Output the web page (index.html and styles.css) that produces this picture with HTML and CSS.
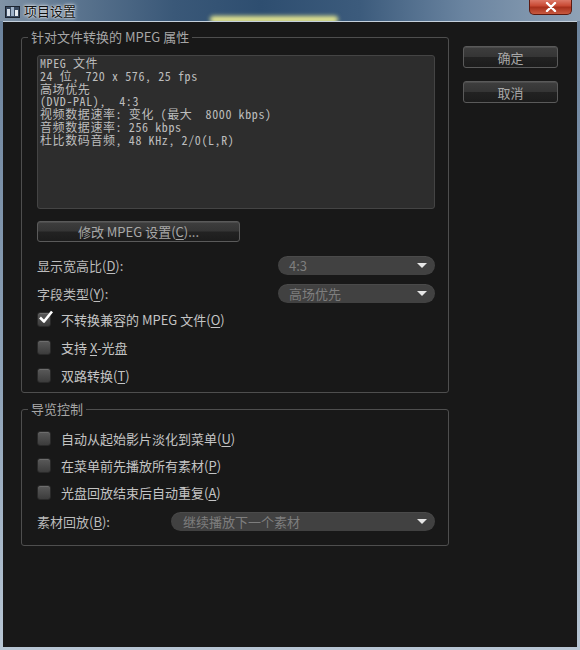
FILE: index.html
```html
<!DOCTYPE html>
<html lang="zh-CN">
<head>
  <meta charset="UTF-8" />
  <title>项目设置</title>
  <link rel="stylesheet" href="styles.css">
</head>
<body>

  <div class="window">
    <div class="titlebar">
      <span class="glow"></span>
      <span class="app-icon">
        <svg width="15" height="14" viewBox="0 0 15 14">
          <rect x="0.5" y="2.5" width="14" height="11" fill="#3a4a60" stroke="#1c2430"/>
          <rect x="2" y="5" width="3" height="7" fill="#d8e0ea"/>
          <rect x="6" y="3" width="3" height="9" fill="#9fb2c8"/>
          <rect x="10" y="6" width="3" height="6" fill="#e8ecf0"/>
        </svg>
      </span>
      <span class="title">项目设置</span>
      <div class="close-btn">
        <svg width="12" height="10" viewBox="0 0 12 10">
          <path d="M2 1 L10 9 M10 1 L2 9" stroke="#fff" stroke-width="2.4" stroke-linecap="round"/>
        </svg>
      </div>
    </div>

    <div class="client">
      <div class="left-col">

        <fieldset class="group group-mpeg">
          <legend>针对文件转换的 MPEG 属性</legend>

          <div class="info-box">MPEG 文件
24 位, 720 x 576, 25 fps
高场优先
(DVD-PAL),  4:3
视频数据速率: 变化 (最大  8000 kbps)
音频数据速率: 256 kbps
杜比数码音频, 48 KHz, 2/0(L,R)</div>

          <button class="btn btn-wide">修改 MPEG 设置(<u>C</u>)...</button>

          <div class="field-row first">
            <span class="label">显示宽高比(<u>D</u>):</span>
            <div class="select select-short"><span>4:3</span><i class="arrow"></i></div>
          </div>
          <div class="field-row">
            <span class="label">字段类型(<u>Y</u>):</span>
            <div class="select select-short"><span>高场优先</span><i class="arrow"></i></div>
          </div>

          <div class="check-list">
            <label class="check-row">
              <span class="box checked">
                <svg width="16" height="14" viewBox="0 0 16 14">
                  <path d="M2 7.5 L6 11.5 L14 1.5" fill="none" stroke="#fff" stroke-width="2.6" stroke-linejoin="round"/>
                </svg>
              </span>
              <span>不转换兼容的 MPEG 文件(<u>O</u>)</span>
            </label>
            <label class="check-row"><span class="box"></span><span>支持 <u>X</u>-光盘</span></label>
            <label class="check-row"><span class="box"></span><span>双路转换(<u>T</u>)</span></label>
          </div>
        </fieldset>

        <fieldset class="group group-nav">
          <legend>导览控制</legend>

          <div class="check-list tight">
            <label class="check-row"><span class="box"></span><span>自动从起始影片淡化到菜单(<u>U</u>)</span></label>
            <label class="check-row"><span class="box"></span><span>在菜单前先播放所有素材(<u>P</u>)</span></label>
            <label class="check-row"><span class="box"></span><span>光盘回放结束后自动重复(<u>A</u>)</span></label>
          </div>

          <div class="field-row last">
            <span class="label">素材回放(<u>B</u>):</span>
            <div class="select select-long"><span>继续播放下一个素材</span><i class="arrow"></i></div>
          </div>
        </fieldset>

      </div>

      <div class="right-col">
        <button class="btn btn-side">确定</button>
        <button class="btn btn-side">取消</button>
      </div>
    </div>
  </div>

</body>
</html>
```

FILE: styles.css
```css
* {
  margin: 0;
  padding: 0;
  box-sizing: border-box;
}
body {
  width: 580px;
  height: 650px;
  overflow: hidden;
  font-family: "Noto Sans CJK SC", "Liberation Sans", sans-serif;
  font-size: 13px;
}
u {
  text-decoration: underline;
  text-underline-offset: 2px;
}

/* window frame */
.window {
  width: 580px;
  height: 650px;
  display: flex;
  flex-direction: column;
  background: linear-gradient(180deg, #6a819b, #8fa3b8 60%, #b8c6d4);
  padding: 0 3px 3px;
}
.titlebar {
  height: 21px;
  margin: 0 -3px;
  padding: 0 8px 0 5px;
  display: flex;
  align-items: center;
  position: relative;
  overflow: hidden;
  background: linear-gradient(90deg, #8193a6 0%, #5d7690 12%, #3a5878 30%, #2e4e70 45%, #3c5b7c 62%, #6a84a0 80%, #8fa2b6 100%);
}
/* blurred desktop highlight behind the glass */
.glow {
  position: absolute;
  left: 210px;
  bottom: -2px;
  width: 128px;
  height: 7px;
  border-radius: 4px;
  background: #e4e690;
  filter: blur(2px);
}
.app-icon {
  width: 15px;
  height: 14px;
  display: flex;
  position: relative;
}
.title {
  position: relative;
  margin-left: 4px;
  font-size: 13px;
  color: #101010;
  text-shadow: 0 0 4px #fff, 0 0 2px #fff;
}
.close-btn {
  position: absolute;
  top: -1px;
  right: 8px;
  width: 43px;
  height: 16px;
  border: 1px solid #5c1a10;
  border-top: none;
  border-radius: 0 0 5px 5px;
  background: linear-gradient(180deg, #e08070 0%, #c84a34 45%, #a8301c 55%, #c85a40 100%);
  display: flex;
  align-items: center;
  justify-content: center;
}

.client {
  flex: 1;
  display: flex;
  gap: 14px;
  background: #181818;
  border-top: 1px solid #c4d0dc;
  padding: 7px 0 0 18px;
}
.left-col {
  width: 428px;
}

/* group boxes */
.group {
  border: 1px solid #4e4e4e;
  border-radius: 3px;
  padding: 10px 13px 3px 15px;
}
.group legend {
  margin-left: -9px;
  padding: 0 3px;
  line-height: 16px;
  color: #a6a6a6;
}
.group-nav {
  margin-top: 8px;
  padding: 8px 13px 14px 15px;
}

.info-box {
  height: 154px;
  background: #2d2d2d;
  border: 1px solid #444;
  border-radius: 3px;
  padding: 1px 2px;
  white-space: pre;
  font-family: "Noto Sans Mono CJK SC", "Liberation Mono", "Noto Sans CJK SC", monospace;
  font-size: 12px;
  letter-spacing: 0.6px;
  line-height: 12.8px;
  color: #bdbdbd;
}

/* buttons */
.btn {
  display: block;
  font-family: inherit;
  font-size: 13px;
  color: #a8a8a8;
  border: 1px solid #5a5a5a;
  border-radius: 3px;
  background: linear-gradient(180deg, #3e3e3e 0%, #353535 48%, #222 52%, #1c1c1c 100%);
  box-shadow: inset 0 1px 0 rgba(255, 255, 255, 0.08);
}
.btn-wide {
  width: 203px;
  height: 21px;
  margin-top: 12px;
  line-height: 18px;
}
.right-col {
  display: flex;
  flex-direction: column;
  gap: 13px;
  padding-top: 17px;
}
.btn-side {
  width: 95px;
  height: 22px;
}

/* label + dropdown rows */
.field-row {
  height: 19px;
  margin-top: 9px;
  display: flex;
  align-items: center;
  justify-content: space-between;
}
.field-row.first {
  margin-top: 14px;
}
.field-row.last {
  margin-top: 6px;
}
.label {
  color: #bcbcbc;
}
.select {
  height: 19px;
  border-radius: 10px;
  background: #414141;
  box-shadow: inset 0 1px 0 rgba(255, 255, 255, 0.05);
  display: flex;
  align-items: center;
  justify-content: space-between;
  padding: 0 8px 0 11px;
  color: #7e7e7e;
}
.select-short {
  width: 157px;
}
.select-long {
  width: 264px;
  padding-left: 12px;
}
.arrow {
  width: 0;
  height: 0;
  border-left: 5px solid transparent;
  border-right: 5px solid transparent;
  border-top: 5px solid #e6e6e6;
}

/* checkboxes */
.check-list {
  margin-top: 2px;
}
.check-list.tight {
  margin-top: 0;
}
.check-row {
  height: 28px;
  display: flex;
  align-items: center;
  gap: 10px;
  color: #c4c4c4;
}
.tight .check-row {
  height: 27px;
}
.box {
  width: 14px;
  height: 15px;
  border-radius: 3px;
  border: 1px solid #2a2a2a;
  background: linear-gradient(180deg, #5a5a5a, #3c3c3c);
  box-shadow: inset 0 1px 0 rgba(255, 255, 255, 0.12);
  position: relative;
}
.box svg {
  position: absolute;
  left: 0;
  top: -3px;
}
```
